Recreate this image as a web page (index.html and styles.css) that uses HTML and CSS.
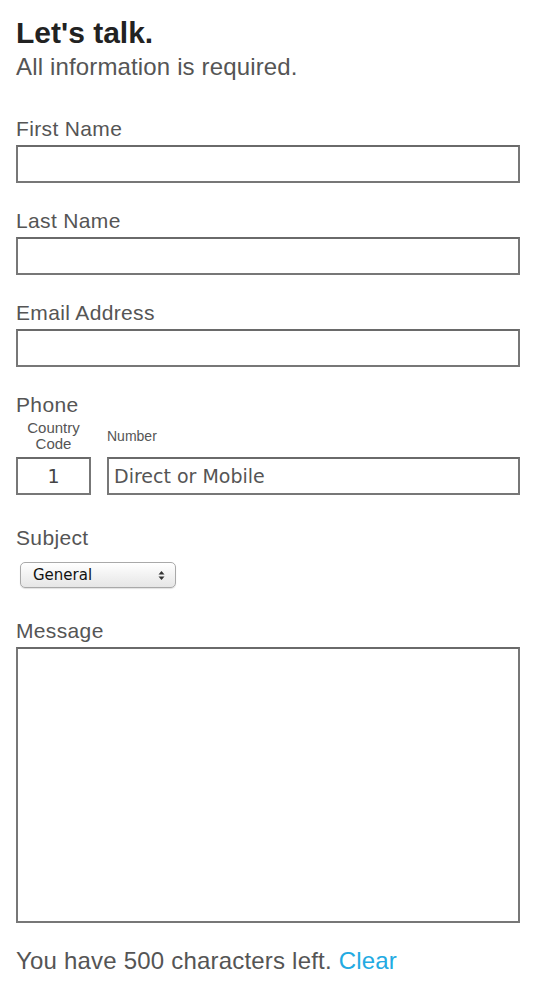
FILE: index.html
```html
<!DOCTYPE html>
<html lang="en">
<head>
<meta charset="utf-8">
<title>Let's talk</title>
<link rel="stylesheet" href="styles.css">
</head>
<body>
<main class="contact">
  <header class="intro">
    <h1 class="intro-title">Let's talk.</h1>
    <p class="intro-note">All information is required.</p>
  </header>

  <form class="form">
    <div class="field">
      <label class="label" for="first">First Name</label>
      <input class="text" id="first" type="text">
    </div>
    <div class="field">
      <label class="label" for="last">Last Name</label>
      <input class="text" id="last" type="text">
    </div>
    <div class="field">
      <label class="label" for="email">Email Address</label>
      <input class="text" id="email" type="text">
    </div>
    <div class="field">
      <span class="label">Phone</span>
      <div class="phone-grid">
        <span class="sublabel sublabel-code">Country<br>Code</span>
        <span class="sublabel">Number</span>
        <input class="text text-code" type="text" value="1">
        <input class="text text-number" type="text" placeholder="Direct or Mobile">
      </div>
    </div>
    <div class="field field-wide">
      <label class="label" for="subject">Subject</label>
      <span class="select-wrap">
        <select class="select" id="subject">
          <option>General</option>
          <option>Sales</option>
          <option>Support</option>
        </select>
        <svg class="select-arrows" width="7" height="11" viewBox="0 0 7 11" aria-hidden="true">
          <path d="M3.5 1 L6.5 4.5 L0.5 4.5 Z" fill="#333"/>
          <path d="M3.5 10 L6.5 6.5 L0.5 6.5 Z" fill="#333"/>
        </svg>
      </span>
    </div>
    <div class="field field-wide">
      <label class="label" for="message">Message</label>
      <textarea class="text textarea" id="message"></textarea>
    </div>
    <p class="counter">You have 500 characters left. <a class="clear" href="#">Clear</a></p>
  </form>
</main>
</body>
</html>
```

FILE: styles.css
```css
* {
  box-sizing: border-box;
}

html, body {
  margin: 0;
  padding: 0;
  background: #ffffff;
}

body {
  font-family: "Liberation Sans", Arial, sans-serif;
  color: #555555;
}

.contact {
  width: 504px;
  margin-left: 16px;
  padding-top: 14px;
}

.intro-title {
  margin: 0;
  font-size: 30px;
  line-height: 38px;
  font-weight: bold;
  color: #222222;
}

.intro-note {
  margin: 0;
  font-size: 24px;
  line-height: 30px;
  letter-spacing: 0.15px;
  color: #555555;
}

.form {
  display: flex;
  flex-direction: column;
  margin: 35px 0 0 0;
}

.field {
  display: flex;
  flex-direction: column;
  align-items: stretch;
}

.field + .field {
  margin-top: 26px;
}

.field + .field-wide {
  margin-top: 31px;
}

.label {
  display: block;
  font-size: 21px;
  line-height: 24px;
  letter-spacing: 0.35px;
  color: #555555;
  margin-bottom: 4px;
}

.text {
  display: block;
  width: 100%;
  height: 38px;
  margin: 0;
  border: 2px solid #777777;
  border-top-color: #6a6a6a;
  border-radius: 0;
  background: #ffffff;
  padding: 0 5px;
  font-family: "DejaVu Sans", "Lucida Grande", sans-serif;
  font-size: 19px;
  color: #555555;
  outline: none;
}

.text::placeholder {
  color: #555555;
  opacity: 1;
}

.phone-grid {
  display: grid;
  grid-template-columns: 75px 1fr;
  column-gap: 16px;
  row-gap: 5px;
  margin-top: -1px;
  align-items: center;
}

.sublabel {
  font-size: 14px;
  line-height: 16px;
  color: #555555;
}

.sublabel-code {
  text-align: center;
  font-size: 15px;
}

.text-code {
  text-align: center;
  color: #444444;
}

.select-wrap {
  position: relative;
  display: inline-block;
  align-self: flex-start;
  margin: 8px 0 0 4px;
}

.select {
  display: block;
  appearance: none;
  -webkit-appearance: none;
  width: 156px;
  height: 26px;
  margin: 0;
  padding: 0 24px 0 12px;
  border: 1px solid #a9a9a9;
  border-radius: 5px;
  background: linear-gradient(#ffffff, #f1f1f1 55%, #e6e6e6);
  box-shadow: 0 1px 1px rgba(0, 0, 0, 0.12);
  font-family: "DejaVu Sans", "Lucida Grande", sans-serif;
  font-size: 15px;
  color: #111111;
  outline: none;
}

.select-arrows {
  position: absolute;
  right: 11px;
  top: 8px;
  pointer-events: none;
}

.textarea {
  height: 276px;
  resize: none;
  padding: 5px;
}

.counter {
  margin: 24px 0 0 0;
  font-size: 24px;
  line-height: 28px;
  letter-spacing: 0.2px;
  color: #555555;
}

.clear {
  color: #22aae2;
  text-decoration: none;
}
```
